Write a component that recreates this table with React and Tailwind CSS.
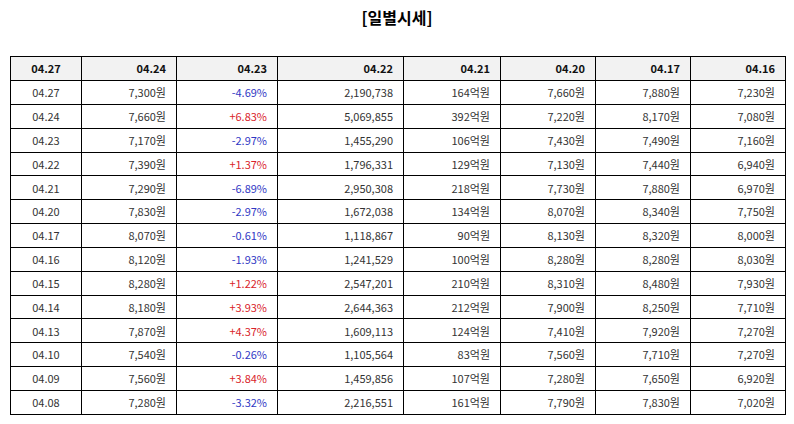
import React from 'react';

const headers = ['04.27', '04.24', '04.23', '04.22', '04.21', '04.20', '04.17', '04.16'];
const widths = ['w-[71px]', 'w-[95px]', 'w-[101px]', 'w-[126px]', 'w-[97px]', 'w-[95px]', 'w-[95px]', 'w-[95px]'];

const rows = [
   ['04.27', '7,300원', '-4.69%', '2,190,738', '164억원', '7,660원', '7,880원', '7,230원'],
   ['04.24', '7,660원', '+6.83%', '5,069,855', '392억원', '7,220원', '8,170원', '7,080원'],
   ['04.23', '7,170원', '-2.97%', '1,455,290', '106억원', '7,430원', '7,490원', '7,160원'],
   ['04.22', '7,390원', '+1.37%', '1,796,331', '129억원', '7,130원', '7,440원', '6,940원'],
   ['04.21', '7,290원', '-6.89%', '2,950,308', '218억원', '7,730원', '7,880원', '6,970원'],
   ['04.20', '7,830원', '-2.97%', '1,672,038', '134억원', '8,070원', '8,340원', '7,750원'],
   ['04.17', '8,070원', '-0.61%', '1,118,867', '90억원', '8,130원', '8,320원', '8,000원'],
   ['04.16', '8,120원', '-1.93%', '1,241,529', '100억원', '8,280원', '8,280원', '8,030원'],
   ['04.15', '8,280원', '+1.22%', '2,547,201', '210억원', '8,310원', '8,480원', '7,930원'],
   ['04.14', '8,180원', '+3.93%', '2,644,363', '212억원', '7,900원', '8,250원', '7,710원'],
   ['04.13', '7,870원', '+4.37%', '1,609,113', '124억원', '7,410원', '7,920원', '7,270원'],
   ['04.10', '7,540원', '-0.26%', '1,105,564', '83억원', '7,560원', '7,710원', '7,270원'],
   ['04.09', '7,560원', '+3.84%', '1,459,856', '107억원', '7,280원', '7,650원', '6,920원'],
   ['04.08', '7,280원', '-3.32%', '2,216,551', '161억원', '7,790원', '7,830원', '7,020원'],
];

const rateColor = (v) => (v.startsWith('+') ? 'text-[#d9232a]' : 'text-[#3038c4]');

export default function App() {
   return (
      <div className="w-[794px] h-[424px] bg-white font-['Noto_Sans_CJK_KR','Noto_Sans',sans-serif]">
         {/* title */}
         <h1 className="pt-[5px] h-[56px] text-center text-[16px] font-bold text-black leading-[24px]">[일별시세]</h1>

         <table className="ml-[10px] w-[775px] border-collapse table-fixed text-[11px]">
            <thead>
               <tr className="h-[24px] bg-[#f2f2f2]">
                  {headers.map((h, i) => (
                     <th
                        key={i}
                        className={`${widths[i]} border border-black font-bold text-[#111] ${i === 0 ? 'text-center' : 'text-right pr-[10px]'}`}
                     >
                        {h}
                     </th>
                  ))}
               </tr>
            </thead>
            <tbody>
               {rows.map((row, r) => (
                  <tr key={r} className="h-[23.85px]">
                     {row.map((cell, i) => (
                        <td
                           key={i}
                           className={`border border-black ${i === 0 ? 'text-center' : 'text-right pr-[10px]'} ${i === 2 ? rateColor(cell) : 'text-[#333]'}`}
                        >
                           {cell}
                        </td>
                     ))}
                  </tr>
               ))}
            </tbody>
         </table>
      </div>
   );
}
